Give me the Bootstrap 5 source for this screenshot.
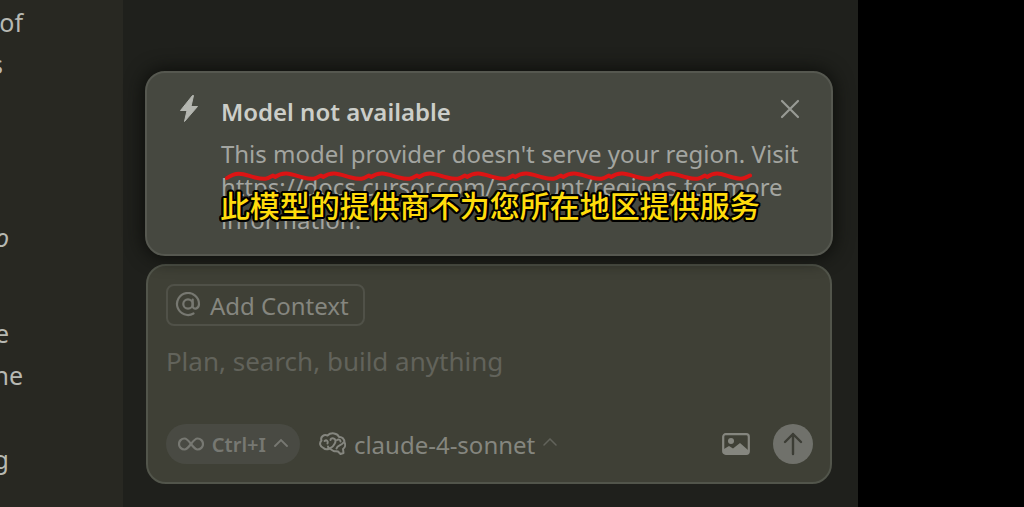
<!DOCTYPE html>
<html lang="en">
<head>
<meta charset="utf-8">
<meta name="viewport" content="width=device-width, initial-scale=1">
<title>Chat composer</title>
<link href="https://cdn.jsdelivr.net/npm/bootstrap@5.3.0/dist/css/bootstrap.min.css" rel="stylesheet">
<style>
body{background:#000;font-family:"Noto Sans","Noto Sans CJK SC",sans-serif;font-size:24px;line-height:33px;color:#a3a5a0}
.doc-pane{width:12%;background:#282822;color:#b7b9b3;font-size:25px;line-height:42px;padding-top:1px}
.tail{display:flex;justify-content:flex-end;height:42px;width:9px;white-space:nowrap}
.tail.short{width:3px}
.tail.long{width:23px}
.gap-lg{margin-top:131px}
.gap-md{margin-top:54px}
.gap-sm{margin-top:42px}
.chat-pane{width:71.8%;background:#1f201c;padding:71px 25px 0 22px}
.notice{background:#464840;border:2px solid #565850;border-radius:20px;padding:17px 22px 18px 32px;box-shadow:0 0 18px 2px #0d0e0b;min-height:185px}
.notice-icon{width:42px}
.notice-body{padding-top:5px}
.notice h1{font-size:24px;line-height:34px;font-weight:600;color:#cccec9;margin:0 0 8px}
.notice a{color:inherit;text-decoration:none}
.close-x{top:22px;right:28px}
.plain{background:none;border:0;padding:0;color:inherit;line-height:33px}
.squiggle{left:76px;top:96px}
.caption{left:73px;top:109px;font-family:"Noto Sans CJK SC",sans-serif;font-weight:500;font-size:30px;line-height:44px;color:#ffdc0c;white-space:nowrap;
text-shadow:2px 0 #000,-2px 0 #000,0 2px #000,0 -2px #000,2px 1px #000,-2px 1px #000,2px -1px #000,-2px -1px #000,1px 2px #000,-1px 2px #000,1px -2px #000,-1px -2px #000}
.composer{background:#3f4036;border:2px solid #52554b;border-radius:20px;margin:8px 1px 0;padding:18px 17px 18px 18px;color:#85867f}
.context-btn{border:2px solid #505148;border-radius:8px;height:42px;padding:0 14px 0 7px;gap:9px}
.prompt{background:none;border:0;padding:0;margin-top:18px;height:38px;width:100%;font-size:26px;line-height:34px;color:#85867f;outline:0;resize:none;display:block;overflow:hidden}
.prompt::placeholder{color:#62635b;opacity:1}
.tools{margin-top:42px;height:40px}
.mode-btn{background:#494a43;border-radius:20px;height:40px;width:134px;font-size:20px;font-weight:600;color:#777872}
.model-btn{margin-left:19px;gap:8px}
.send-btn{width:40px;height:40px;background:#70716b;margin-left:23px}
</style>
</head>
<body>
<div class="d-flex min-vh-100">
  <aside class="doc-pane overflow-hidden flex-shrink-0">
    <div class="tail long">of</div>
    <div class="tail short">s</div>
    <div class="tail gap-lg"><em>o</em></div>
    <div class="tail gap-md">e</div>
    <div class="tail long">ne</div>
    <div class="tail gap-sm">g</div>
  </aside>
  <main class="chat-pane flex-shrink-0">
    <section class="notice position-relative d-flex" role="alert">
      <div class="notice-icon flex-shrink-0">
        <svg width="24" height="30" viewBox="0 0 24 30" fill="#b4b6b0"><path d="M13.500 0.500 1.500 15.500h6.500L5.500 26.500 18.500 11.500h-6.500L14.500 0.500z" stroke="#b4b6b0" stroke-linejoin="round"/></svg>
      </div>
      <div class="notice-body">
        <h1>Model not available</h1>
        <p class="m-0">This model provider doesn't serve your region. Visit <a href="https://docs.cursor.com/account/regions">https://docs.cursor.com/account/regions</a> for more information.</p>
      </div>
      <button class="plain close-x position-absolute d-flex" type="button" aria-label="Close">
        <svg width="26" height="28" viewBox="0 0 26 28" fill="none" stroke="#989a94" stroke-width="2.200" stroke-linecap="round"><path d="m5 6 16 16M21 6 5 22"/></svg>
      </button>
      <svg class="squiggle position-absolute" width="532" height="16" viewBox="0 0 532 16" fill="none" stroke="#dc1414" stroke-width="4" stroke-linejoin="round" stroke-linecap="round">
        <path d="M4 9C15 1 22 6 32 8.500S44 10 50 6.500l2 1.500C62 1 70 6 80 8.500S92 10 98 6.500l2 1.500C110 1 118 6 128 8.500S140 10 146 6.500l2 1.500C158 1 166 6 176 8.500S188 10 194 6.500l2 1.500C206 1 214 6 224 8.500S236 10 242 6.500l2 1.500C254 1 262 6 272 8.500S284 10 290 6.500l2 1.500C302 1 310 6 320 8.500S332 10 338 6.500l2 1.500C350 1 358 6 368 8.500S380 10 386 6.500l2 1.500C398 1 406 6 416 8.500S428 10 434 6.500l2 1.500C446 1 454 6 464 8.500S476 10 482 6.500l2 1.500C494 1 500 6 510 8.500S522 9 527 6.500"/>
      </svg>
      <div class="caption position-absolute" lang="zh-CN">此模型的提供商不为您所在地区提供服务</div>
    </section>
    <form class="composer">
      <button class="plain context-btn d-inline-flex align-items-center" type="button">
        <svg width="26" height="26" viewBox="0 0 26 26" fill="none" stroke="#777871" stroke-width="2.200" stroke-linecap="round"><circle cx="13" cy="12" r="4.700"/><path d="M17.700 7.500V14c0 4 6.300 3.500 6.300-2A11 11 0 1 0 18.500 21.500"/></svg>
        Add Context
      </button>
      <textarea class="prompt" rows="1" aria-label="Prompt" placeholder="Plan, search, build anything"></textarea>
      <div class="tools d-flex align-items-center">
        <button class="plain mode-btn d-flex align-items-center justify-content-center gap-2" type="button">
          <svg width="26" height="16" viewBox="0 0 26 16" fill="none" stroke="currentColor" stroke-width="2.200"><path d="M13 8C10 4 8.500 2.500 6.500 2.500a5.500 5.500 0 0 0 0 11C8.500 13.500 10 12 13 8s4.500-5.500 6.500-5.500a5.500 5.500 0 0 1 0 11C17.500 13.500 16 12 13 8z"/></svg>
          Ctrl+I
          <svg width="14" height="12" viewBox="0 0 14 12" fill="none" stroke="currentColor" stroke-width="1.800" stroke-linecap="round"><path d="m1 8 6-6 6 6"/></svg>
        </button>
        <button class="plain model-btn d-flex align-items-center" type="button">
          <svg width="27" height="24" viewBox="0 0 27 24" fill="none" stroke="currentColor" stroke-width="2" stroke-linecap="round" stroke-linejoin="round"><path d="M8.500 3.500C5 2 1 5 2.500 8.500 0 11 1 15 4.500 16c1.500 1.500 4 1.500 6 .5l4 2.500c2 .5 3 0 4.500.5l2.500 2.500 3-1-.5-4c2.500-1.500 2.500-4.500 1.500-6.500C25.500 7 23 4.500 20 5 18.500 1 12 0 8.500 3.500z"/><path d="M5.500 9c2-1.500 4 0 3 2.500M10.500 16.500c2.500-1 4.500-3 5.500-5.500 1-2 .5-4-1.500-4.500s-3 .5-3 1.500M10.500 16.500c-1-.5-1.500-1-1.500-2M24.500 10.500c-2 3-6 2.500-7 6M18 8c1.500-1 3.500-.5 3.500 1.500"/></svg>
          <span>claude-4-sonnet</span>
          <svg width="14" height="12" viewBox="0 0 14 12" fill="none" stroke="#62635b" stroke-width="1.500" stroke-linecap="round"><path d="m1 7 6-6 6 6"/></svg>
        </button>
        <button class="plain ms-auto d-flex" type="button" aria-label="Attach image">
          <svg width="28" height="22" viewBox="0 0 28 22"><rect x="1.200" y="1.200" width="25.600" height="19.600" rx="2.500" fill="none" stroke="#85867f" stroke-width="2.200"/><circle cx="9" cy="8" r="3" fill="#85867f"/><path d="m2 16 5-3 4 2.500 7-5.500 8 7v4H2z" fill="#85867f"/></svg>
        </button>
        <button class="plain send-btn rounded-circle d-flex align-items-center justify-content-center" type="button" aria-label="Send">
          <svg width="20" height="24" viewBox="0 0 20 24" fill="none" stroke="#3c3d35" stroke-width="2.400" stroke-linecap="round" stroke-linejoin="round"><path d="M10 22V2M2 10l8-8 8 8"/></svg>
        </button>
      </div>
    </form>
  </main>
</div>
<script src="https://cdn.jsdelivr.net/npm/bootstrap@5.3.0/dist/js/bootstrap.bundle.min.js"></script>
</body>
</html>
